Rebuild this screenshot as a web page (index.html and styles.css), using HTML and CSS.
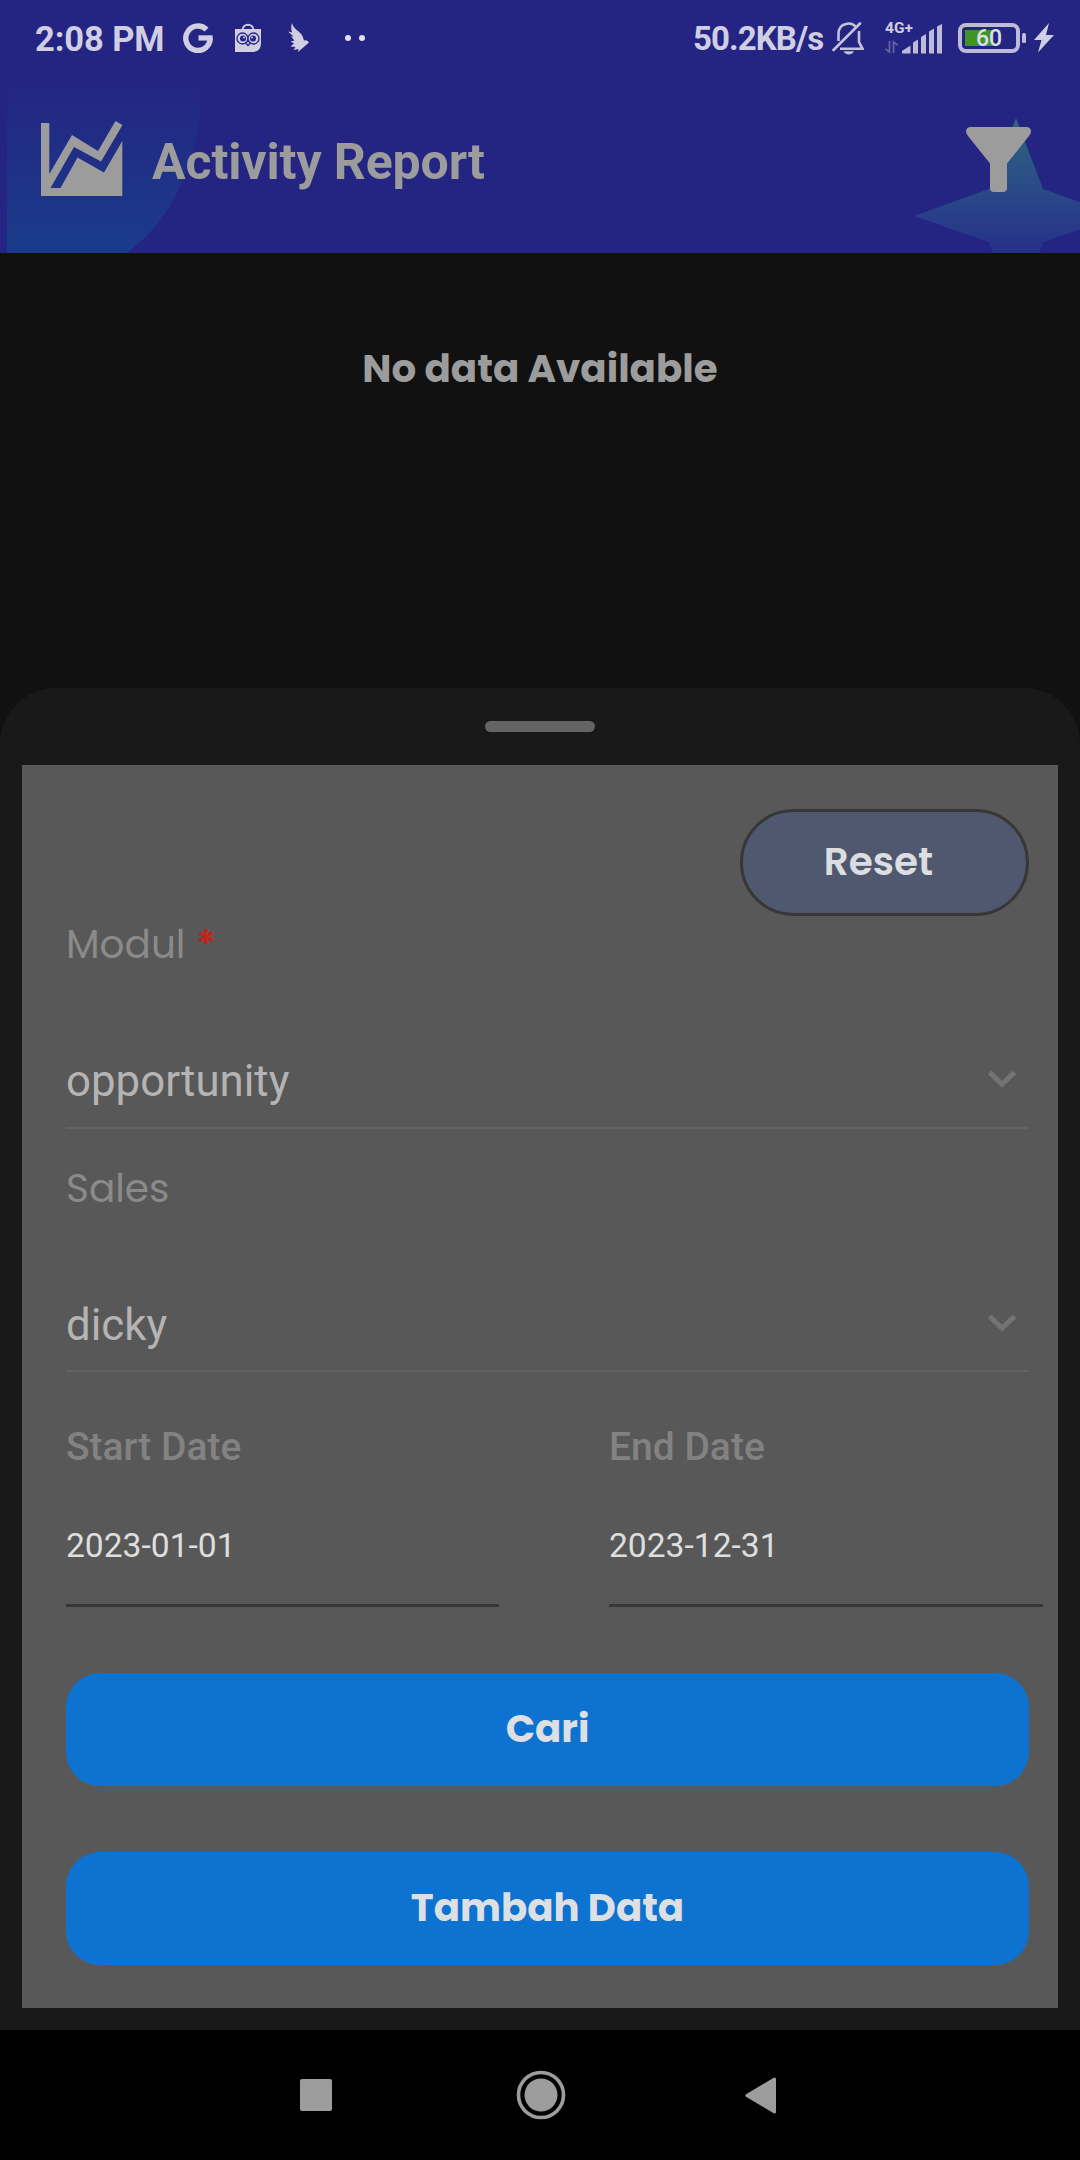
FILE: index.html
```html
<!DOCTYPE html>
<html lang="id">
<head>
<meta charset="utf-8">
<title>Activity Report</title>
<link rel="stylesheet" href="styles.css">
</head>
<body>
<header class="header">
  <svg class="decor" width="1080" height="253" viewBox="0 0 1080 253">
    <defs>
      <linearGradient id="blob" gradientUnits="userSpaceOnUse" x1="0" y1="80" x2="0" y2="253"><stop offset="0" stop-color="#1a3c8a" stop-opacity="0"/><stop offset="1" stop-color="#1a3c8a"/></linearGradient>
      <linearGradient id="star" gradientUnits="userSpaceOnUse" x1="0" y1="118" x2="0" y2="253"><stop offset="0" stop-color="#2f657f"/><stop offset=".5" stop-color="#2a4b88"/><stop offset="1" stop-color="#273088"/></linearGradient>
    </defs>
    <path fill="url(#blob)" d="M7 80H202C201 118 196 152 182 182C170 210 153 233 127 253H7Z"/>
    <path fill="url(#star)" d="M1016 118L1043 189L1118 216L1043 242L1016 314L989 242L914 216L989 189Z"/>
  </svg>
  <div class="status">
    <span class="clock">2:08 PM</span>
    <svg class="ic-g" width="30" height="30" viewBox="0 0 30 30"><path fill="none" stroke="#cfcee2" stroke-width="5.4" d="M23.6 6.6A12.2 12.2 0 1 0 27.2 15"/><path fill="#cfcee2" d="M15.5 12.3H29.6V17.6H15.5Z"/></svg>
    <svg class="ic-bag" width="26" height="30" viewBox="0 0 26 30"><path fill="none" stroke="#cfcee2" stroke-width="2" d="M7.5 7C8 0 18 0 18.500 7"/><path fill="#cfcee2" d="M0 6H26V20Q26 29 17 29H0Z"/><g fill="#cfcee2" stroke="#242582" stroke-width="1.300"><circle cx="7.500" cy="15.500" r="5.500"/><circle cx="18.500" cy="15.500" r="5.500"/><path d="M10.500 20L13 18L15.500 20L13 22.500Z"/></g><circle cx="8" cy="15.500" r="3" fill="#242582"/><circle cx="18" cy="15.500" r="3" fill="#242582"/><circle cx="9" cy="14.500" r="1" fill="#cfcee2"/><circle cx="17" cy="14.500" r="1" fill="#cfcee2"/></svg>
    <svg class="ic-wing" width="22" height="30" viewBox="0 0 22 30"><path fill="#cfcee2" d="M4 0C5 6 12 8 14.500 13L16 17.500Q19 16.500 21 19.500L10 29L10.500 26L5.500 27L7.500 24L2.500 23.500L6 20.500L2.500 18.500L6.500 17.500L3 13.500L5.500 13.500L0 8.500L4 9.500Q2.500 4 4 0Z"/></svg>
    <svg class="ic-dots" width="20" height="6" viewBox="0 0 20 6"><circle cx="3" cy="3" r="3" fill="#e0e0ee"/><circle cx="17" cy="3" r="3" fill="#e0e0ee"/></svg>
    <span class="speed">50.2KB/s</span>
    <svg class="ic-bell" width="32" height="33" viewBox="0 0 32 33"><g fill="none" stroke="#c3c2dc" stroke-width="2.600"><path d="M24 5C21 1.500 17 1 14 2C9 3 6.500 7 6.500 12V19"/><path d="M27 9V20L30.500 26.800H8"/><path stroke-linecap="round" d="M1.500 28L28 1.500"/></g><path fill="#c3c2dc" d="M11.500 29.200H22Q20 32.500 16.700 32.500Q13.500 32.500 11.500 29.200Z"/></svg>
    <div class="net">
      <span class="net-label">4G+</span>
      <svg width="58" height="30" viewBox="0 0 58 30"><g fill="#bcbbda"><path d="M17 29.500V27L25.500 21.500V29.500Z"/><path d="M28 29.500V18.500L33 15.500V29.500Z"/><path d="M36 29.500V13L41 10V29.500Z"/><path d="M44 29.500V7.500L49 4.500V29.500Z"/><path d="M52 29.500V2.500L57 0V29.500Z"/></g><path fill="none" stroke="#6564a8" stroke-width="1.700" d="M0.500 25L4.500 28V17M12.500 21L8.500 18V29"/></svg>
    </div>
    <div class="battery"><span class="pct">60</span></div>
    <svg class="ic-nub" width="4" height="10" viewBox="0 0 4 10"><rect width="4" height="10" rx="1.500" fill="#bcbbda"/></svg>
    <svg class="ic-bolt" width="20" height="30" viewBox="0 0 20 30"><path fill="#cfcee2" d="M15 0L0 17H7.500L4 29.500L20 12H12Z"/></svg>
  </div>
  <div class="titlebar">
    <svg class="ic-chart" width="82" height="76" viewBox="0 0 82 76"><path fill="#9c9c9c" d="M0 2H8.300V53L31 14L57 30L74.500 0L81.500 4L60 40.500L33 26L9.500 67H19.500L36.500 36.500L63 51.500L81.300 20V75H0Z"/></svg>
    <h1 class="title">Activity Report</h1>
    <svg class="ic-filter" width="66" height="66" viewBox="0 0 66 66"><path fill="#9c9c9c" d="M4 0H61Q65 0.500 65 4.500Q65 6 63 9L41 36.500V61Q41 65 37 65H28Q24 65 24 61V36.500L2 9Q0 6 0 4.500Q0 0.500 4 0Z"/></svg>
  </div>
</header>
<main class="content">
  <p class="empty">No data Available</p>
</main>
<section class="sheet">
  <div class="handle"></div>
  <form class="panel">
    <button type="button" class="reset">Reset</button>
    <div class="label">Modul <span class="required">*</span></div>
    <div class="select"><span>opportunity</span><svg width="28" height="17" viewBox="0 0 28 17"><path fill="none" stroke="#737373" stroke-width="5" d="M1.600 1.300L14 13.300L26.400 1.300"/></svg></div>
    <div class="label label-sales">Sales</div>
    <div class="select select-sales"><span>dicky</span><svg width="28" height="17" viewBox="0 0 28 17"><path fill="none" stroke="#737373" stroke-width="5" d="M1.600 1.300L14 13.300L26.400 1.300"/></svg></div>
    <div class="dates">
      <div class="date"><div class="date-label">Start Date</div><div class="date-value">2023-01-01</div></div>
      <div class="date"><div class="date-label">End Date</div><div class="date-value">2023-12-31</div></div>
    </div>
    <div class="actions">
      <button type="button" class="action action-search">Cari</button>
      <button type="button" class="action action-add">Tambah Data</button>
    </div>
  </form>
</section>
<nav class="navbar">
  <svg width="32" height="32" viewBox="0 0 32 32"><rect width="32" height="32" rx="2" fill="#9c9c9c"/></svg>
  <svg width="50" height="50" viewBox="0 0 50 50"><circle cx="25" cy="25" r="22.500" fill="none" stroke="#9c9c9c" stroke-width="3.600"/><circle cx="25" cy="25" r="16.500" fill="#9c9c9c"/></svg>
  <svg width="32" height="37" viewBox="0 0 32 37"><path fill="#9c9c9c" stroke="#9c9c9c" stroke-width="3" stroke-linejoin="round" d="M1.800 18.500L29.500 2V35Z"/></svg>
</nav>
</body>
</html>
```
FILE: styles.css
```css
* { box-sizing: border-box; }
body {
  margin: 0;
  width: 1080px;
  height: 2160px;
  display: flex;
  flex-direction: column;
  background: #111;
  font-family: Roboto, sans-serif;
  overflow: hidden;
}
svg { display: block; flex: none; }
.header {
  position: relative;
  height: 253px;
  background: #242582;
  overflow: hidden;
}
.decor { position: absolute; left: 0; top: 0; }
.status {
  position: relative;
  display: flex;
  align-items: center;
  height: 76px;
  padding-left: 35px;
  color: #cfcee2;
  white-space: nowrap;
}
.clock { width: 148px; font-size: 34.500px; font-weight: 700; letter-spacing: -0.100px; line-height: 40px; padding-top: 2px; }
.ic-bag { margin-left: 22px; }
.ic-wing { margin-left: 27px; }
.ic-dots { margin-left: 35px; }
.speed { margin-left: 328px; width: 139px; font-size: 33px; font-weight: 700; letter-spacing: -0.900px; line-height: 40px; padding-top: 1px; }
.net { display: flex; flex-direction: column; width: 58px; height: 32px; margin-left: 21px; }
.net-label { height: 2px; font-size: 15.500px; font-weight: 700; line-height: 12px; }
.battery {
  display: flex;
  align-items: center;
  justify-content: center;
  width: 62px;
  height: 30px;
  margin-left: 15px;
  border: 4px solid #bcbbda;
  border-radius: 8px;
  background: linear-gradient(#42922c, #42922c) 3px 3px / 28px 16px no-repeat;
}
.pct { font-size: 23px; font-weight: 500; line-height: 22px; padding-top: 2px; color: #d8e0e0; }
.ic-nub { margin-left: 2px; }
.ic-bolt { margin-left: 8px; }
.titlebar {
  position: relative;
  display: flex;
  height: 177px;
  padding: 45px 48px 0 41px;
}
.title {
  margin: 13px 0 0 29px;
  flex: 1;
  color: #9c9c9c;
  font-size: 50px;
  font-weight: 700;
  letter-spacing: -0.120px;
  line-height: 56px;
}
.ic-filter { margin-top: 6px; }
.content { height: 435px; padding-top: 86px; }
.empty, .reset, .label, .action { font-family: Poppins, Inter, sans-serif; }
.empty {
  margin: 0;
  text-align: center;
  color: #9c9c9c;
  font-size: 38.800px;
  font-weight: 700;
  line-height: 60px;
}
.sheet {
  height: 1342px;
  padding: 33px 22px 22px;
  background: #191919;
  border-radius: 56px 56px 0 0;
}
.handle { width: 110px; height: 11px; margin: 0 auto 33px; border-radius: 5.500px; background: #646464; }
.panel {
  display: flex;
  flex-direction: column;
  height: 1243px;
  padding: 44px 29px 43px 44px;
  background: #585858;
}
.reset {
  align-self: flex-end;
  width: 289px;
  height: 107px;
  padding: 0 12px 1px 0;
  border: 3px solid #373737;
  border-radius: 54px;
  background: #4f586e;
  color: #dcdde0;
  font-size: 39px;
  font-weight: 600;
  line-height: 60px;
}
.label { height: 56px; padding-top: 1px; color: #8a8a8a; font-size: 39px; line-height: 56px; }
.required { color: #c6221a; font-weight: 600; }
.label-sales { margin-top: 31px; }
.select {
  display: flex;
  justify-content: space-between;
  height: 157px;
  padding: 79px 13px 16px 0;
  border-bottom: 2px solid #636363;
  color: #b4b4b4;
  font-size: 43.800px;
  line-height: 60px;
}
.select-sales { height: 156px; padding-bottom: 15px; }
.select svg { margin-top: 20px; }
.dates { display: grid; grid-template-columns: 433px 434px; column-gap: 110px; margin-top: 47px; }
.date { border-bottom: 3px solid #373737; padding-bottom: 33px; }
.date-label { height: 56px; color: #828282; font-size: 39px; font-weight: 500; line-height: 56px; }
.date-value { margin-top: 46px; color: #dedede; font-size: 33.600px; line-height: 50px; }
.actions { display: flex; flex-direction: column; gap: 66px; margin-top: auto; }
.action {
  height: 113px;
  padding: 0 0 1px;
  border: 0;
  border-radius: 34px;
  background: #0e72d1;
  color: #dcdfe4;
  font-size: 38.700px;
  font-weight: 700;
  line-height: 60px;
}
.navbar {
  display: flex;
  align-items: center;
  height: 130px;
  padding-left: 300px;
  background: #000;
}
.navbar svg + svg { margin-left: 183.500px; }
.navbar svg:last-child { margin-left: 179px; }
```
